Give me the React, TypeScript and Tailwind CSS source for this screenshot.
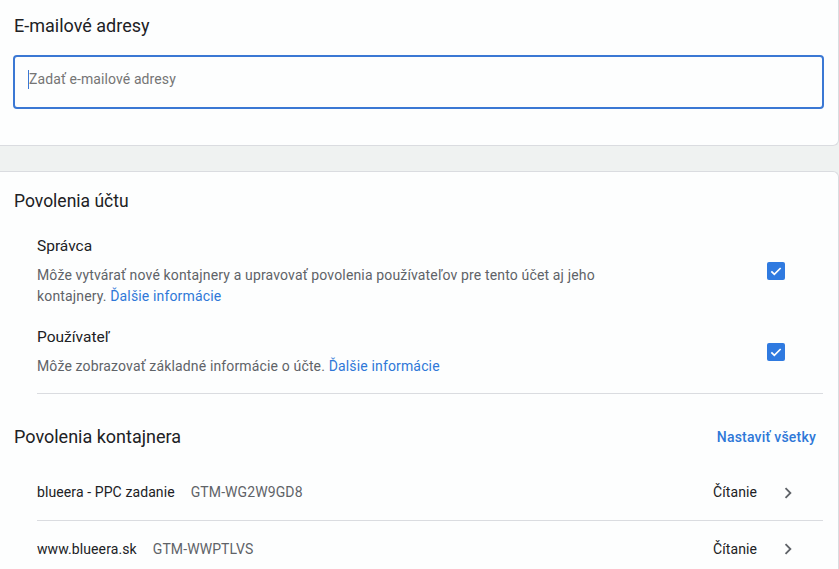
import React from 'react';

const CheckBox: React.FC = () => (
  <div className="w-[18px] h-[18px] rounded-[2px] bg-[#2f7ae0] flex items-center justify-center">
    <svg viewBox="0 0 24 24" className="w-[16px] h-[16px]" fill="none" stroke="#fff" strokeWidth={2.6}>
      <path d="M5 12.5l4.5 4.5L19 7.5" />
    </svg>
  </div>
);

const Chevron: React.FC = () => (
  <svg viewBox="0 0 24 24" className="w-[22px] h-[22px]" fill="#5f6368">
    <path d="M8.59 16.59L13.17 12 8.59 7.41 10 6l6 6-6 6-1.41-1.41z" />
  </svg>
);

const permissions = [
  {
    title: 'Správca',
    desc: 'Môže vytvárať nové kontajnery a upravovať povolenia používateľov pre tento účet aj jeho kontajnery.',
  },
  {
    title: 'Používateľ',
    desc: 'Môže zobrazovať základné informácie o účte.',
  },
];

const containers = [
  { name: 'blueera - PPC zadanie', id: 'GTM-WG2W9GD8' },
  { name: 'www.blueera.sk', id: 'GTM-WWPTLVS' },
];

export default function App() {
  return (
    <div className="w-[839px] h-[569px] overflow-hidden bg-[#eff2f1] font-['Roboto',sans-serif] text-[#202124]">
      {/* E-mail card */}
      <div className="bg-[#fdfefe] h-[146px] rounded-br-[6px] border-b border-r border-[#dadce0] pt-[14px]">
        <h2 className="px-[14px] text-[18px] leading-[24px] text-[#202124]">E-mailové adresy</h2>
        <div className="mt-[17px] ml-[13px] w-[811px] h-[54px] rounded-[4px] border-2 border-[#3b78d4] flex items-center pl-[13px] pb-[6px]">
          <span className="w-px h-[19px] bg-[#3b78d4]" />
          <span className="text-[14px] tracking-[0.1px] text-[#757575]">Zadať e-mailové adresy</span>
        </div>
      </div>

      {/* Permissions card */}
      <div className="mt-[25px] bg-[#fdfefe] h-[420px] rounded-tr-[6px] border-t border-r border-[#dadce0] pt-[17px]">
        <h2 className="px-[14px] text-[17.5px] leading-[24px]">Povolenia účtu</h2>

        <div className="pl-[37px] pr-[15px] mt-[22px]">
          {permissions.map((p, i) => (
            <div key={p.title} className={`flex items-center ${i === 0 ? 'pb-[19px]' : ''}`}>
              <div className="flex-1">
                <div className="text-[15.5px] leading-[22px]">{p.title}</div>
                <p className="mt-[8px] text-[14px] tracking-[0.15px] leading-[21px] text-[#5f6368] w-[600px]">
                  {p.desc} <a className="text-[#2f78d8]">Ďalšie informácie</a>
                </p>
              </div>
              <div className="mr-[38px]">
                <CheckBox />
              </div>
            </div>
          ))}
          <div className="mt-[16px] border-t border-[#dadce0]" />
        </div>

        <div className="flex items-center justify-between px-[14px] pr-[22px] mt-[31px]">
          <h2 className="text-[18px] leading-[24px]">Povolenia kontajnera</h2>
          <a className="text-[14px] tracking-[0.2px] font-medium text-[#2f78d8]">Nastaviť všetky</a>
        </div>

        <div className="pl-[37px] pr-[15px] mt-[16px]">
          {containers.map((c, i) => (
            <div
              key={c.id}
              className={`flex items-center h-[56px] ${i === 0 ? 'border-b border-[#dadce0]' : ''}`}
            >
              <span className="text-[14px] tracking-[0.1px]">{c.name}</span>
              <span className="ml-[16px] text-[14px] tracking-[0.1px] text-[#5f6368]">{c.id}</span>
              <span className="ml-auto text-[14px] tracking-[0.1px]">Čítanie</span>
              <span className="ml-[20px] mr-[24px]">
                <Chevron />
              </span>
            </div>
          ))}
        </div>
      </div>
    </div>
  );
}
